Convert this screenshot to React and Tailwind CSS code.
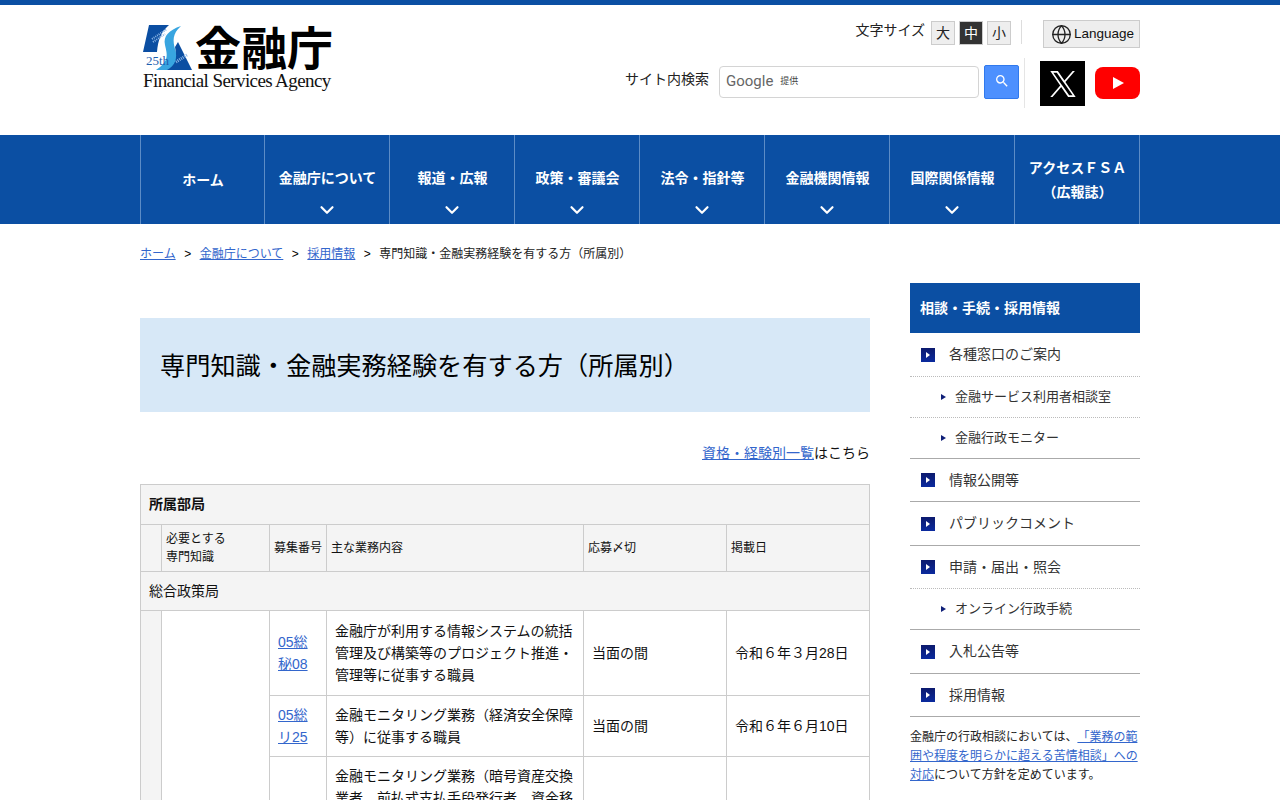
import React from "react";
import { ChevronDown, Globe } from "lucide-react";

const navItems = [
  { label: "ホーム", w: "w-[124px]" },
  { label: "金融庁について", sub: true, w: "w-[125px]" },
  { label: "報道・広報", sub: true, w: "w-[125px]" },
  { label: "政策・審議会", sub: true, w: "w-[125px]" },
  { label: "法令・指針等", sub: true, w: "w-[125px]" },
  { label: "金融機関情報", sub: true, w: "w-[125px]" },
  { label: "国際関係情報", sub: true, w: "w-[125px]" },
  { label: "アクセスＦＳＡ\n（広報誌）", w: "w-[125px]" },
];

const sideItems = [
  { label: "各種窓口のご案内", h: "h-[44px]", border: "border-b border-dotted border-[#bbb]" },
  { label: "金融サービス利用者相談室", sub: true, h: "h-[41px]", border: "border-b border-dotted border-[#bbb]" },
  { label: "金融行政モニター", sub: true, h: "h-[41px]", border: "border-b border-[#aaa]" },
  { label: "情報公開等", h: "h-[43px]", border: "border-b border-[#aaa]" },
  { label: "パブリックコメント", h: "h-[44px]", border: "border-b border-[#aaa]" },
  { label: "申請・届出・照会", h: "h-[43px]", border: "border-b border-dotted border-[#bbb]" },
  { label: "オンライン行政手続", sub: true, h: "h-[41px]", border: "border-b border-[#aaa]" },
  { label: "入札公告等", h: "h-[44px]", border: "border-b border-[#aaa]" },
  { label: "採用情報", h: "h-[43px]", border: "border-b border-[#aaa]" },
];

const Logo = () => (
  <div className="w-[190px]">
    <div className="flex items-start h-[47px]">
      <svg width="50" height="46" viewBox="0 0 50 46" className="shrink-0">
        <path d="M6 0H26C18 7 15 15 14 27H0Z" fill="#0b4ea2" />
        <path d="M35 17L49 45H20C30 41 34 30 32 22Z" fill="#0b4ea2" />
        <path d="M9 14L24 4M10 17L22 9" stroke="#8fb8e6" strokeWidth="2" strokeDasharray="1 1" />
        <path d="M33 37L44 30" stroke="#8fb8e6" strokeWidth="3" strokeDasharray="1 1" />
        <path d="M38 1C26 5 20 11 22 20C24 29 27 36 13 45H24C32 41 35 33 32 24C30 16 29 9 38 1Z" fill="#38a5e0" />
        <text x="3" y="40" fontSize="13" fill="#1f5fb0" fontFamily="Liberation Serif, serif">25th</text>
      </svg>
      <span className="ml-[2px] -mt-[8px] text-[46px] leading-[56px] font-bold text-black whitespace-nowrap [font-family:'Noto_Sans_CJK_JP',sans-serif]">金融庁</span>
    </div>
    <div className="text-[19px] tracking-[-0.6px] leading-[18px] whitespace-nowrap text-[#111] [font-family:'Liberation_Serif',serif]">Financial Services Agency</div>
  </div>
);

const SizeButton = ({ label, active }) => (
  <span
    className={`flex items-center justify-center w-[24px] h-[24px] border border-[#ccc] text-[14px] ${
      active ? "bg-[#333] text-white" : "bg-[#eee] text-[#222]"
    }`}
  >
    {label}
  </span>
);

const Header = () => (
  <header className="h-[130px] w-[1000px] mx-auto flex justify-between">
    <div className="pt-[20px] pl-[3px]">
      <Logo />
    </div>
    <div className="flex flex-col items-end pt-[15px]">
      <div className="flex items-start h-[28px]">
        <span className="text-[14px] leading-[20px] text-[#222] mr-[6px]">文字サイズ</span>
        <div className="flex gap-[4px] mt-[1px]">
          <SizeButton label="大" />
          <SizeButton label="中" active />
          <SizeButton label="小" />
        </div>
        <div className="w-px h-[24px] bg-[#ddd] mr-[21px] ml-[10px]" />
        <div className="flex items-center h-[28px] w-[97px] pl-[7px] pt-[1px] bg-[#eee] border border-[#ccc] text-[13.5px] text-[#111]">
          <Globe size={21} strokeWidth={1.5} className="mr-[2px] shrink-0 text-[#222]" />
          Language
        </div>
      </div>
      <div className="flex items-start mt-[13px]">
        <span className="mt-[8px] text-[14px] leading-[20px] text-[#222] mr-[10px]">サイト内検索</span>
        <div className="mt-[5px] w-[260px] h-[32px] border border-[#d4d4d4] rounded-[4px] flex items-center pl-[6px] bg-white">
          <span className="-mt-[2px] text-[15px] text-[#666] [font-family:Roboto,sans-serif]">Google</span>
          <span className="text-[9px] text-[#444] ml-[7px]">提供</span>
        </div>
        <div className="mt-[4px] ml-[5px] w-[35px] h-[34px] rounded-[2px] bg-[#4d90fe] border border-[#3079ed] flex items-center justify-center">
          <svg width="16" height="16" viewBox="0 0 24 24" className="-mt-[2px]">
            <path
              fill="#fff"
              d="M15.5 14h-.79l-.28-.27A6.47 6.47 0 0 0 16 9.5 6.5 6.5 0 1 0 9.5 16c1.61 0 3.09-.59 4.23-1.57l.27.28v.79l5 4.99L20.49 19l-4.99-5zm-6 0C7.01 14 5 11.99 5 9.5S7.01 5 9.5 5 14 7.01 14 9.5 11.99 14 9.5 14z"
            />
          </svg>
        </div>
        <div className="-mt-[3px] w-px h-[50px] bg-[#e5e5e5] ml-[5px] mr-[15px]" />
        <div className="w-[45px] h-[45px] bg-black flex items-center justify-center">
          <svg width="26" height="26" viewBox="0 0 1200 1227">
            <path
              fill="#fff"
              d="M714 519 1161 0h-106L667 451 357 0H0l468 682L0 1226h106l409-476 327 476h357L714 519Zm-145 169-47-68L144 80h163l304 436 47 68 396 566H891L569 688Z"
            />
          </svg>
        </div>
        <div className="mt-[6px] ml-[10px] w-[45px] h-[32px] rounded-[8px] bg-[#ff0000] flex items-center justify-center">
          <svg width="14" height="14" viewBox="0 0 14 14">
            <path d="M2 1L13 7L2 13Z" fill="#fff" />
          </svg>
        </div>
      </div>
    </div>
  </header>
);

const Nav = () => (
  <nav className="h-[89px] bg-[#0b4fa3]">
    <ul className="w-[1000px] mx-auto h-full flex border-l border-[#5c8cc6]">
      {navItems.map((item) => (
        <li
          key={item.label}
          className={`relative ${item.w} flex items-center justify-center pl-[1px] border-r border-[#5c8cc6] text-white text-[14px] font-bold text-center whitespace-pre-line leading-[24px]`}
        >
          {item.sub ? (
            <>
              <span className="-mt-[3px]">{item.label}</span>
              <ChevronDown size={22} strokeWidth={2.4} className="absolute left-1/2 -translate-x-1/2 bottom-[3px]" />
            </>
          ) : (
            <span>{item.label}</span>
          )}
        </li>
      ))}
    </ul>
  </nav>
);

const Breadcrumb = () => (
  <div className="w-[1000px] mx-auto h-[59px] flex items-center text-[12px] text-[#222]">
    <a className="text-[#3366cc] underline">ホーム</a>
    <span className="mx-[8.5px] text-black">&gt;</span>
    <a className="text-[#3366cc] underline">金融庁について</a>
    <span className="mx-[8.5px] text-black">&gt;</span>
    <a className="text-[#3366cc] underline">採用情報</a>
    <span className="mx-[8.5px] text-black">&gt;</span>
    <span>専門知識・金融実務経験を有する方（所属別）</span>
  </div>
);

const th = "border border-[#ccc] bg-[#f4f4f4] text-left";
const td = "border border-[#ccc] px-[8px] py-[8px] align-middle leading-[22px]";

const JobTable = () => (
  <table className="w-[729px] table-fixed border-collapse text-[14px] text-[#111]">
    <colgroup>
      <col className="w-[21px]" />
      <col className="w-[108px]" />
      <col className="w-[57px]" />
      <col className="w-[257px]" />
      <col className="w-[143px]" />
      <col className="w-[143px]" />
    </colgroup>
    <tbody>
      <tr className="h-[40px]">
        <th colSpan={6} className={`${th} px-[8px] font-bold`}>所属部局</th>
      </tr>
      <tr className="h-[47px] text-[12px]">
        <th className={`${th} font-normal`} />
        <th className={`${th} font-normal px-[4px] leading-[18px]`}>必要とする<br />専門知識</th>
        <th className={`${th} font-normal px-[4px] whitespace-nowrap`}>募集番号</th>
        <th className={`${th} font-normal px-[4px]`}>主な業務内容</th>
        <th className={`${th} font-normal px-[4px]`}>応募〆切</th>
        <th className={`${th} font-normal px-[4px]`}>掲載日</th>
      </tr>
      <tr className="h-[39px]">
        <td colSpan={6} className={`${th} px-[8px]`}>総合政策局</td>
      </tr>
      <tr className="h-[85px]">
        <td rowSpan={3} className="border border-[#ccc] bg-[#f4f4f4]" />
        <td rowSpan={3} className="border border-[#ccc]" />
        <td className={td}><a className="text-[#3366cc] underline">05総秘08</a></td>
        <td className={td}>金融庁が利用する情報システムの統括管理及び構築等のプロジェクト推進・管理等に従事する職員</td>
        <td className={td}>当面の間</td>
        <td className={td}>令和６年３月28日</td>
      </tr>
      <tr className="h-[61px]">
        <td className={td}><a className="text-[#3366cc] underline">05総リ25</a></td>
        <td className={td}>金融モニタリング業務（経済安全保障等）に従事する職員</td>
        <td className={td}>当面の間</td>
        <td className={td}>令和６年６月10日</td>
      </tr>
      <tr>
        <td className={td} />
        <td className={td}>金融モニタリング業務（暗号資産交換業者、前払式支払手段発行者、資金移動業者等）に従事する職員</td>
        <td className={td} />
        <td className={td} />
      </tr>
    </tbody>
  </table>
);

const Sidebar = () => (
  <aside className="w-[230px] shrink-0">
    <div className="h-[50px] bg-[#0b4fa3] flex items-center px-[10px] text-white text-[14px] font-bold">相談・手続・採用情報</div>
    <ul className="text-[#333]">
      {sideItems.map((item) => (
        <li key={item.label} className={`flex items-center ${item.h} ${item.border} ${item.sub ? "text-[13px] pl-[31px]" : "text-[14px] pl-[11px]"}`}>
          {item.sub ? (
            <span className="w-0 h-0 border-y-[3px] border-y-transparent border-l-[5px] border-l-[#0f1f78] mr-[9px]" />
          ) : (
            <span className="w-[14px] h-[14px] bg-gradient-to-b from-[#0c1a6e] to-[#0a2a9e] flex items-center justify-center mr-[14px]">
              <span className="w-0 h-0 border-y-[3px] border-y-transparent border-l-[4px] border-l-white" />
            </span>
          )}
          {item.label}
        </li>
      ))}
    </ul>
    <p className="mt-[11px] text-[12px] leading-[19px] text-[#222] [text-spacing-trim:space-all]">
      金融庁の行政相談においては、<a className="text-[#3366cc] underline">「業務の範囲や程度を明らかに超える苦情相談」への対応</a>について方針を定めています。
    </p>
  </aside>
);

export default function App() {
  return (
    <div className="h-screen overflow-hidden bg-white border-t-[5px] border-[#0b4fa3] [font-family:'Liberation_Sans','Noto_Sans_CJK_JP',sans-serif]">
      <Header />
      <Nav />
      <Breadcrumb />
      <div className="w-[1000px] mx-auto flex justify-between">
        <main className="w-[730px] pt-[35px]">
          <h1 className="h-[94px] bg-[#d7e8f7] flex items-center pl-[20px] pt-[3px] text-[25.2px] text-black whitespace-nowrap">専門知識・金融実務経験を有する方（所属別）</h1>
          <p className="mt-[30px] mb-[20px] text-right text-[14px] leading-[22px] text-[#111]">
            <a className="text-[#3366cc] underline">資格・経験別一覧</a>はこちら
          </p>
          <JobTable />
        </main>
        <Sidebar />
      </div>
    </div>
  );
}
